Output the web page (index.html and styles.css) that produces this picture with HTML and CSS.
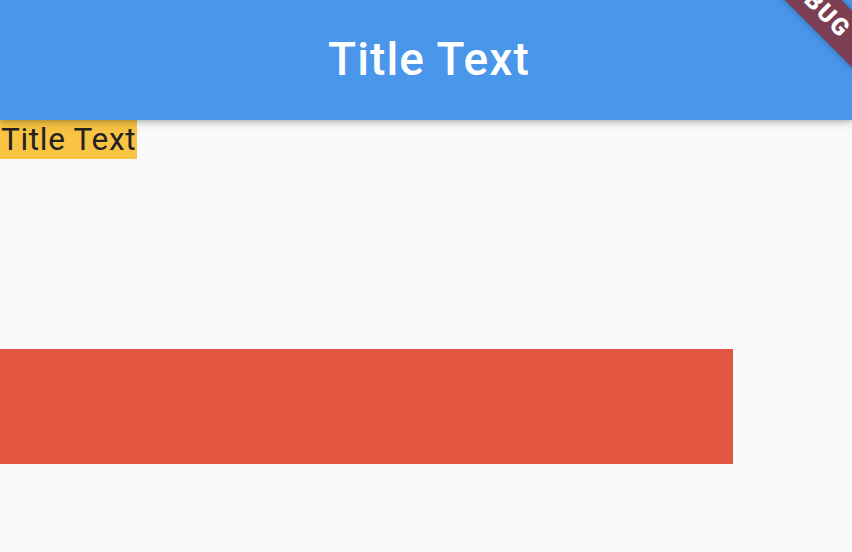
FILE: index.html
```html
<!DOCTYPE html>
<html>
<head>
<meta charset="utf-8">
<link rel="stylesheet" href="styles.css">
</head>
<body>
<div class="app">
  <header class="appbar"><h1 class="title">Title Text</h1></header>
  <main class="content">
    <div class="label-row"><span class="label">Title Text</span></div>
    <div class="bar"></div>
  </main>
  <div class="banner"><span>DEBUG</span></div>
</div>
</body>
</html>
```
FILE: styles.css
```css
html, body {
  margin: 0;
  padding: 0;
  width: 852px;
  height: 552px;
  overflow: hidden;
  background: #fafafa;
  font-family: Roboto, "Noto Sans", sans-serif;
}
.app {
  position: relative;
  width: 852px;
  height: 552px;
  overflow: hidden;
  display: flex;
  flex-direction: column;
}
.appbar {
  position: relative;
  z-index: 1;
  height: 120px;
  background: #4a96ea;
  display: flex;
  align-items: center;
  justify-content: center;
  box-shadow: 0 2px 4px rgba(0,0,0,0.18), 0 4px 10px rgba(0,0,0,0.12);
}
.title {
  margin: 0 0 2px 6px;
  font-size: 46px;
  font-weight: 500;
  letter-spacing: 1.1px;
  color: #fff;
  line-height: 1;
}
.content {
  display: flex;
  flex-direction: column;
  align-items: flex-start;
}
.label-row {
  display: flex;
}
.label {
  display: block;
  background: #f9c443;
  color: #222;
  font-size: 31.5px;
  letter-spacing: 0.7px;
  line-height: 39px;
  padding: 0 1px 0 1px;
}
.bar {
  margin-top: 190px;
  width: 733px;
  height: 115px;
  background: #e15541;
}
.banner {
  position: absolute;
  z-index: 2;
  left: 716px;
  top: -17px;
  width: 200px;
  height: 40px;
  transform: rotate(45deg);
  background: #7b3e52;
  box-shadow: 0 0 6px rgba(0,0,0,0.35);
  display: flex;
  align-items: center;
  justify-content: center;
}
.banner span {
  color: #fff;
  font-weight: 900;
  font-size: 24px;
  letter-spacing: 2px;
  line-height: 1;
}
```
